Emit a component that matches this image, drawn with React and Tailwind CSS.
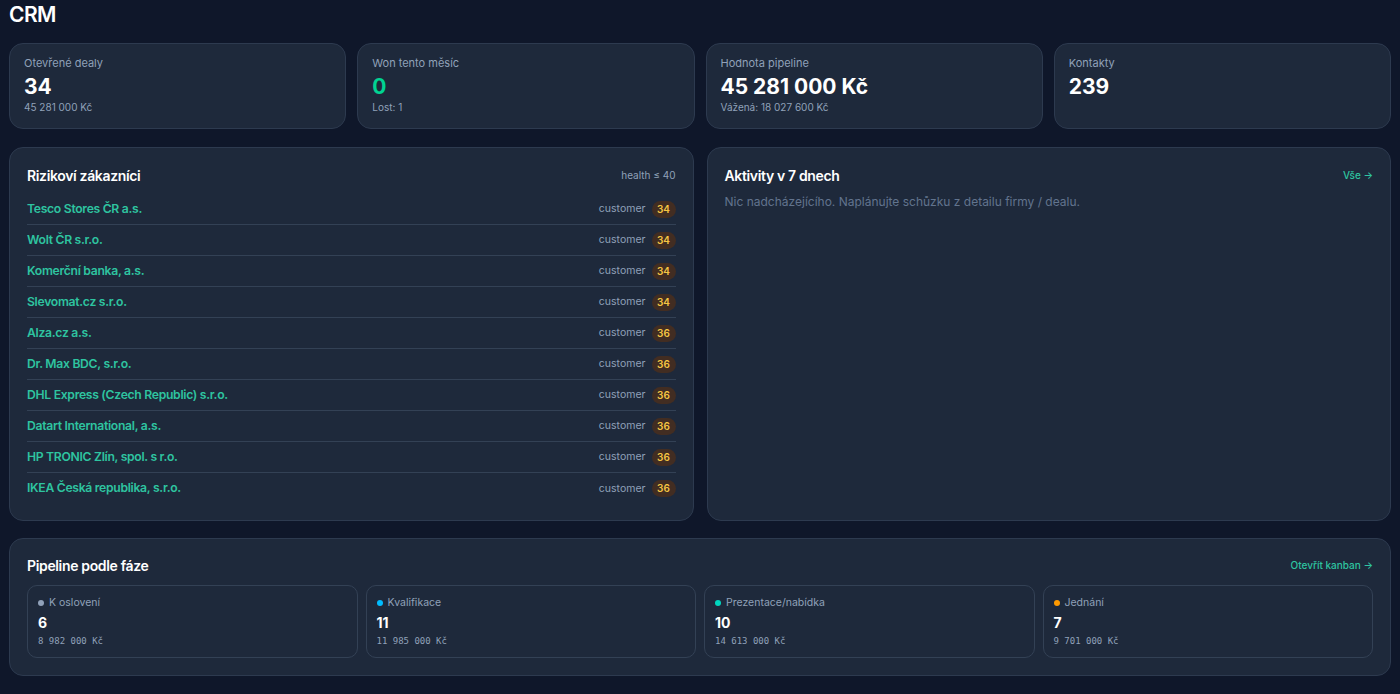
import React from "react";

const stats = [
  { label: "Otevřené dealy", value: "34", sub: "45 281 000 Kč" },
  { label: "Won tento měsíc", value: "0", sub: "Lost: 1", valueClass: "text-emerald-400" },
  { label: "Hodnota pipeline", value: "45 281 000 Kč", sub: "Vážená: 18 027 600 Kč" },
  { label: "Kontakty", value: "239" },
];

const risky = [
  { name: "Tesco Stores ČR a.s.", score: 34 },
  { name: "Wolt ČR s.r.o.", score: 34 },
  { name: "Komerční banka, a.s.", score: 34 },
  { name: "Slevomat.cz s.r.o.", score: 34 },
  { name: "Alza.cz a.s.", score: 36 },
  { name: "Dr. Max BDC, s.r.o.", score: 36 },
  { name: "DHL Express (Czech Republic) s.r.o.", score: 36 },
  { name: "Datart International, a.s.", score: 36 },
  { name: "HP TRONIC Zlín, spol. s r.o.", score: 36 },
  { name: "IKEA Česká republika, s.r.o.", score: 36 },
];

const stages = [
  { name: "K oslovení", count: 6, amount: "8 982 000 Kč", dot: "bg-slate-400" },
  { name: "Kvalifikace", count: 11, amount: "11 985 000 Kč", dot: "bg-sky-400" },
  { name: "Prezentace/nabídka", count: 10, amount: "14 613 000 Kč", dot: "bg-teal-400" },
  { name: "Jednání", count: 7, amount: "9 701 000 Kč", dot: "bg-amber-500" },
];

const Card = ({ className = "", children }) => (
  <div className={`bg-[#1e293b] border border-[#2d3a4f] rounded-[14px] ${className}`}>{children}</div>
);

export default function App() {
  return (
    <div className="min-h-screen bg-[#0f172a] text-white font-['Inter',sans-serif] pl-[9px] pr-[9px] pt-[2px] pb-4">
      <h1 className="text-[21px] leading-[26px] font-semibold tracking-tight">CRM</h1>

      {/* KPI row */}
      <div className="grid grid-cols-4 gap-[11px] mt-[15px]">
        {stats.map((s) => (
          <Card key={s.label} className="h-[86px] px-[14px] pt-[12px]">
            <div className="text-[11px] leading-[14px] text-slate-400">{s.label}</div>
            <div className={`text-[21px] leading-[26px] font-bold mt-[4px] ${s.valueClass || "text-white"}`}>{s.value}</div>
            {s.sub && <div className="text-[10px] leading-[14px] text-slate-400">{s.sub}</div>}
          </Card>
        ))}
      </div>

      <div className="grid grid-cols-2 gap-[13px] mt-[18px]">
        {/* at-risk customers */}
        <Card className="h-[374px] px-[17px] pt-[17px]">
          <div className="flex items-center justify-between h-[20px]">
            <h2 className="text-[14px] font-semibold tracking-tight">Rizikoví zákazníci</h2>
            <span className="text-[10px] text-slate-400">health ≤ 40</span>
          </div>
          <ul className="mt-[9px]">
            {risky.map((r, i) => (
              <li
                key={r.name}
                className={`flex items-center justify-between h-[31px] ${i < risky.length - 1 ? "border-b border-[#334155]" : ""}`}
              >
                <span className="text-[12.2px] font-semibold text-[#2ec4a0] tracking-tight">{r.name}</span>
                <span className="flex items-center gap-[6px]">
                  <span className="text-[10.5px] text-slate-400">customer</span>
                  <span className="bg-[#422d22] text-[#f5c542] text-[10px] font-semibold rounded-full w-[24px] h-[17px] flex items-center justify-center">
                    {r.score}
                  </span>
                </span>
              </li>
            ))}
          </ul>
        </Card>

        {/* upcoming activities */}
        <Card className="h-[374px] px-[17px] pt-[17px]">
          <div className="flex items-center justify-between h-[20px]">
            <h2 className="text-[14px] font-semibold tracking-tight">Aktivity v 7 dnech</h2>
            <a className="text-[10px] font-medium text-[#2ec4a0]">Vše →</a>
          </div>
          <p className="text-[12px] text-slate-500 mt-[8px]">Nic nadcházejícího. Naplánujte schůzku z detailu firmy / dealu.</p>
        </Card>
      </div>

      {/* pipeline by stage */}
      <Card className="mt-[17px] px-[17px] pt-[16px] pb-[17px]">
        <div className="flex items-center justify-between h-[20px]">
          <h2 className="text-[14px] font-semibold tracking-tight">Pipeline podle fáze</h2>
          <a className="text-[10px] font-medium text-[#2ec4a0]">Otevřít kanban →</a>
        </div>
        <div className="grid grid-cols-4 gap-[8px] mt-[10px]">
          {stages.map((s) => (
            <div key={s.name} className="h-[73px] border border-[#334155] rounded-[10px] px-[10px] pt-[10px]">
              <div className="flex items-center gap-[5px] text-[10.5px] text-slate-400 leading-[14px]">
                <span className={`w-[6px] h-[6px] rounded-full ${s.dot}`} />
                {s.name}
              </div>
              <div className="text-[14px] font-bold leading-[18px] mt-[4px]">{s.count}</div>
              <div className="text-[9px] font-['DejaVu_Sans_Mono',monospace] text-slate-400 mt-[3px]">{s.amount}</div>
            </div>
          ))}
        </div>
      </Card>
    </div>
  );
}
